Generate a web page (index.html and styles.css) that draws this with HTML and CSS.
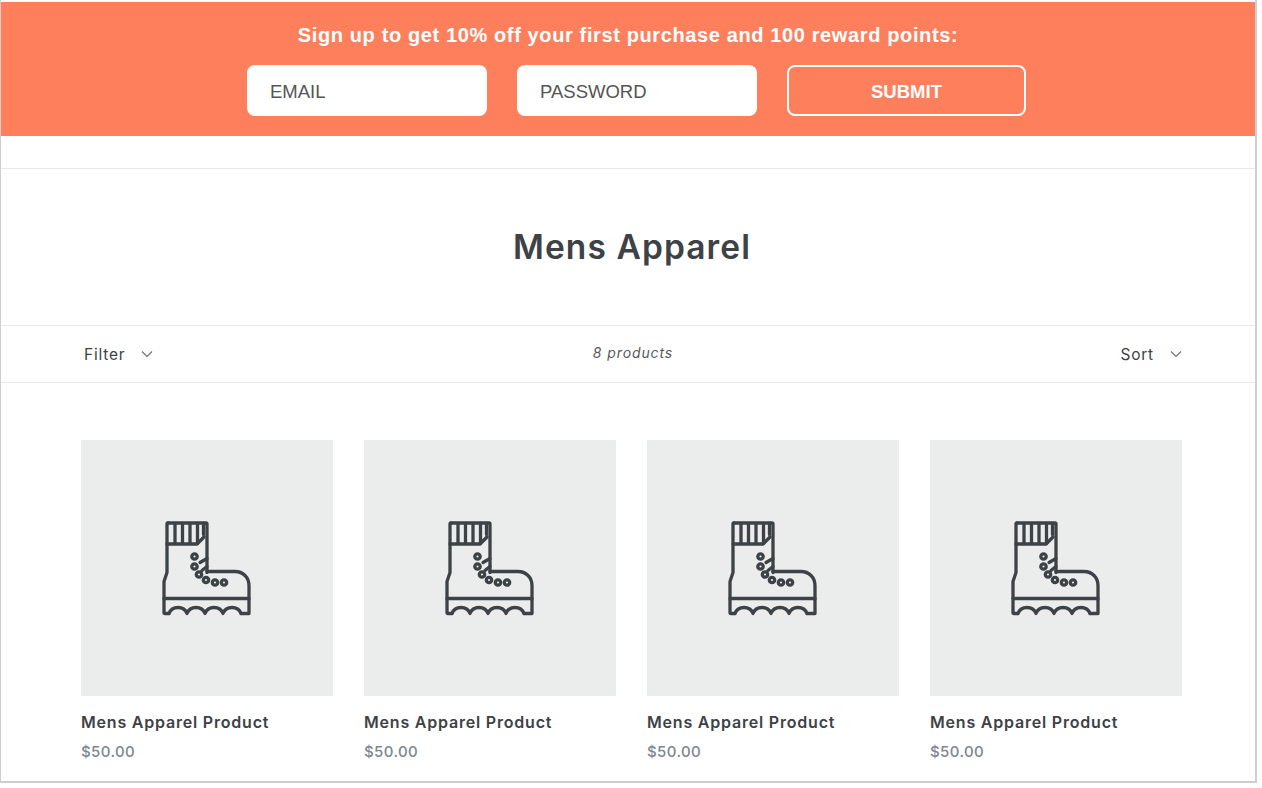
FILE: index.html
```html
<!DOCTYPE html>
<html lang="en">
<head>
<meta charset="utf-8">
<title>Mens Apparel</title>
<link rel="stylesheet" href="styles.css">
</head>
<body>
<svg class="sprite" width="0" height="0" aria-hidden="true">
  <symbol id="boot" viewBox="2 2.5 130 130">
    <g fill="none" stroke="#3d4246" stroke-width="3.300" stroke-linejoin="round" stroke-linecap="round">
      <path d="M28 22.500h38a1 1 0 0 1 1 1V72"/>
      <path d="M28 22.500a1 1 0 0 0-1 1V72l-3 9v31a1 1 0 0 0 1 1h4"/>
      <path d="M27 43.500h30l7-7"/>
      <path d="M35 23v20M42.500 23v20M50 23v20M57.500 23v20M63.500 23v11"/>
      <path d="M67 71h28c8 0 14 6 14 14v28h-8"/>
      <path d="M24 98h85"/>
      <path d="M29 113c1.500-4 5-6 9-6s7.500 2 9 6c1.500-4 5-6 9-6s7.500 2 9 6c1.500-4 5-6 9-6s7.500 2 9 6c1.500-4 5-6 9-6s7.500 2 9 6"/>
      <path d="M60 62l7-4M62 70l5-4"/>
      <circle cx="54.500" cy="56" r="2.700"/>
      <circle cx="54.500" cy="66" r="2.700"/>
      <circle cx="59" cy="74" r="2.700"/>
      <circle cx="66" cy="79.500" r="2.700"/>
      <circle cx="75" cy="82" r="2.700"/>
      <circle cx="84" cy="82" r="2.700"/>
    </g>
  </symbol>
  <symbol id="chev" viewBox="0 0 12 8">
    <path d="M1 1.500l5 5 5-5" fill="none" stroke="#6b7074" stroke-width="1.100"/>
  </symbol>
</svg>
<div class="frame">
  <section class="banner">
    <h2 class="banner-title">Sign up to get 10% off your first purchase and 100 reward points:</h2>
    <form class="banner-form">
      <div class="field">EMAIL</div>
      <div class="field">PASSWORD</div>
      <div class="submit">SUBMIT</div>
    </form>
  </section>
  <div class="spacer"></div>
  <header class="collection-head">
    <h1 class="collection-title">Mens Apparel</h1>
  </header>
  <div class="toolbar">
    <div class="tool tool-left"><span>Filter</span><svg class="chev"><use href="#chev"/></svg></div>
    <div class="count">8 products</div>
    <div class="tool tool-right"><span>Sort</span><svg class="chev"><use href="#chev"/></svg></div>
  </div>
  <main class="grid">
    <article class="card">
      <div class="thumb"><svg class="boot"><use href="#boot"/></svg></div>
      <h3 class="name">Mens Apparel Product</h3>
      <p class="price">$50.00</p>
    </article>
    <article class="card">
      <div class="thumb"><svg class="boot"><use href="#boot"/></svg></div>
      <h3 class="name">Mens Apparel Product</h3>
      <p class="price">$50.00</p>
    </article>
    <article class="card">
      <div class="thumb"><svg class="boot"><use href="#boot"/></svg></div>
      <h3 class="name">Mens Apparel Product</h3>
      <p class="price">$50.00</p>
    </article>
    <article class="card">
      <div class="thumb"><svg class="boot"><use href="#boot"/></svg></div>
      <h3 class="name">Mens Apparel Product</h3>
      <p class="price">$50.00</p>
    </article>
  </main>
</div>
</body>
</html>
```

FILE: styles.css
```css
* { box-sizing: border-box; }
html, body { margin: 0; padding: 0; background: #fff; overflow: hidden; }
body { height: 788px; font-family: "Inter", "Liberation Sans", sans-serif; color: #3d4246; }
.sprite { position: absolute; }
.frame {
  width: 1257px;
  height: 783px;
  padding-top: 2px;
  border-left: 1px solid #cfcfcf;
  border-right: 2px solid #cfcfcf;
  border-bottom: 2px solid #cfcfcf;
  overflow: hidden;
}
.banner {
  height: 134px;
  background: #fe7f5c;
  padding-top: 20px;
  display: flex;
  flex-direction: column;
  align-items: center;
}
.banner-title {
  margin: 0;
  font: bold 20px/26px "Liberation Sans", sans-serif;
  letter-spacing: 0.62px;
  color: #fff;
}
.banner-form { display: flex; gap: 30px; margin-top: 17px; margin-left: 17px; }
.field {
  width: 240px;
  height: 51px;
  background: #fff;
  border-radius: 8px;
  padding-left: 23px;
  font: 18.500px/53px "Liberation Sans", sans-serif;
  color: #555;
}
.submit {
  width: 239px;
  height: 51px;
  border: 2px solid #fff;
  border-radius: 8px;
  text-align: center;
  font: bold 18.500px/49px "Liberation Sans", sans-serif;
  color: #fff;
}
.spacer { height: 33px; border-bottom: 1px solid #e8e9e9; }
.collection-head {
  height: 157px;
  display: flex;
  align-items: center;
  justify-content: center;
  padding-left: 8px;
  border-bottom: 1px solid #e8e9e9;
}
.collection-title { margin: 0 0 1px; font-size: 33.500px; font-weight: 600; line-height: 40px; letter-spacing: 1.100px; }
.toolbar {
  height: 57px;
  display: grid;
  grid-template-columns: 1fr auto 1fr;
  align-items: center;
  padding: 0 73px 0 83px;
  border-bottom: 1px solid #e8e9e9;
}
.tool { display: flex; align-items: center; gap: 16px; font-size: 15.500px; letter-spacing: 0.8px; }
.tool-right { justify-content: flex-end; }
.chev { width: 12px; height: 8px; }
.count { font-size: 14px; line-height: 16px; margin-bottom: 2px; font-style: italic; color: #55595c; letter-spacing: 0.9px; }
.grid {
  display: grid;
  grid-template-columns: repeat(4, 252px);
  column-gap: 31px;
  padding: 57px 0 0 80px;
}
.thumb {
  height: 256px;
  background: #ebeded;
  display: flex;
  align-items: center;
  justify-content: center;
}
.boot { width: 130px; height: 130px; }
.name { margin: 16px 0 0; font-size: 16px; font-weight: 600; line-height: 20px; letter-spacing: 0.8px; }
.price { margin: 10px 0 0; font-size: 15px; font-weight: 500; line-height: 20px; letter-spacing: 0.4px; color: #7b8791; }
```
